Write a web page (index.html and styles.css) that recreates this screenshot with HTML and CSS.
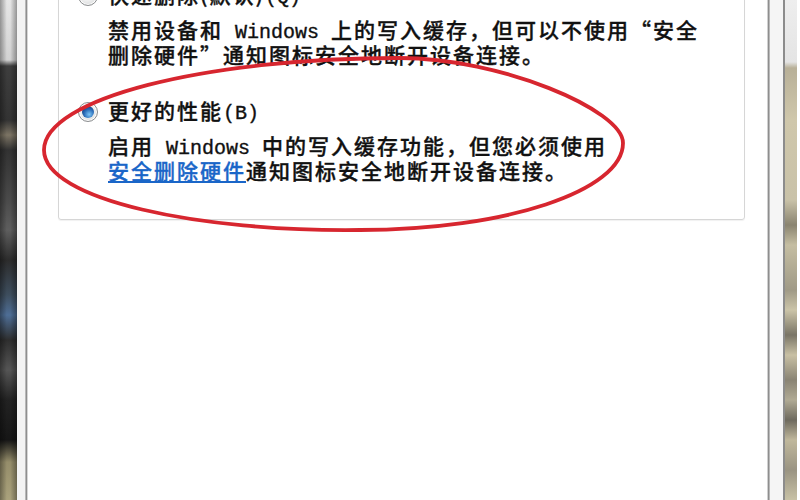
FILE: index.html
```html
<!DOCTYPE html>
<html lang="zh-CN">
<head>
<meta charset="utf-8">
<title>设备策略</title>
<link rel="stylesheet" href="styles.css">
</head>
<body>
<div class="screen">
  <div class="frame-left"></div>
  <div class="edge-left"></div>
  <main class="content">
    <section class="group">
      <div class="option">
        <div class="opt-title"><span class="radio"></span><span class="label">快速删除(默认)<span class="lat">(Q)</span></span></div>
        <p class="desc">禁用设备和<span class="lat"> Windows </span>上的写入缓存，但可以不使用“安全<br>删除硬件”通知图标安全地断开设备连接。</p>
      </div>
      <div class="option second">
        <div class="opt-title"><span class="radio on"></span><span class="label">更好的性能<span class="lat">(B)</span></span></div>
        <p class="desc">启用<span class="lat"> Windows </span>中的写入缓存功能，但您必须使用<br><a class="link" href="#">安全删除硬件</a>通知图标安全地断开设备连接。</p>
      </div>
    </section>
  </main>
  <div class="edge-right"></div>
  <div class="frame-right"></div>
  <svg class="mark" width="800" height="500" viewBox="0 0 800 500" aria-hidden="true">
    <path d="M44 150 C44 99 203 58 400 58 C500 58 623 110 623 143 C623 191 505 230 360 230 C200 232 44 200 44 150 Z" fill="none" stroke="#d7262f" stroke-width="3.8" stroke-linecap="round"/>
  </svg>
</div>
</body>
</html>
```
FILE: styles.css
```css
html, body {
  margin: 0;
  padding: 0;
  background: #fff;
}

.screen {
  position: relative;
  width: 800px;
  height: 500px;
  display: flex;
  overflow: hidden;
  font-family: "Noto Sans CJK SC", "Noto Sans", sans-serif;
}

.frame-left {
  width: 17px;
  flex: none;
  background:
    linear-gradient(to right, rgba(0,0,0,0.35) 0, rgba(0,0,0,0) 40%, rgba(0,0,0,0) 60%, rgba(0,0,0,0.35) 100%),
    linear-gradient(to bottom, #e6e6e6 0, #d2d2d2 60px, #3e3e3e 66px, #333333 120px, #7c7464 135px, #323232 150px, #4a4a4a 200px, #5e5e5e 230px, #2c2c2c 260px, #3e4e5e 295px, #4e6e96 315px, #2e2e2e 340px, #555555 370px, #222222 400px, #161616 440px, #958d6a 462px, #aaa27c 500px);
}

.edge-left {
  width: 11px;
  flex: none;
  background: linear-gradient(to right, #f3f3f3 0 8px, #b8b8b8 8px 9px, #8e8e8e 9px 10px, #d6d6d6 10px 11px);
}

.content {
  flex: 1;
  min-width: 0;
  background: #fff;
  padding: 0 22px 0 30px;
}

.edge-right {
  width: 16px;
  flex: none;
  background: linear-gradient(to right, #d0d0d0 0 1px, #8e8e8e 1px 2px, #b8b8b8 2px 3px, #f5f5f5 3px 16px);
}

.frame-right {
  width: 17px;
  flex: none;
  background:
    linear-gradient(to right, #8c8c8c 0 2px, transparent 2px 14px, #fff 14px),
    linear-gradient(to bottom, #eeeeee 0, #e4e4e4 62px, #b8b098 68px, #cfc7ab 120px, #c9c2a8 200px, #8a8470 225px, #c5bea2 245px, #a09a86 290px, #cbc4a8 310px, #7a7566 335px, #c8c0a4 355px, #8a8474 380px, #b0aa94 400px, #6e6a5e 420px, #c0b89c 440px, #9a9482 470px, #c8c2a6 500px);
}

.group {
  margin-top: -40px;
  padding: 23px 0 37px 19px;
  border: 1px solid #d6d6d6;
  border-radius: 3px;
  box-shadow: 0 1px 1px rgba(0,0,0,0.06);
}

.option {
  color: #111;
  font-size: 21px;
  line-height: 23px;
  letter-spacing: 2px;
  font-weight: 500;
  -webkit-text-stroke: 0.35px #111;
}

.option.second {
  margin-top: 34px;
}

.opt-title {
  display: flex;
  align-items: center;
  gap: 10px;
  height: 23px;
}

.radio {
  position: relative;
  flex: none;
  width: 20px;
  height: 20px;
  box-sizing: border-box;
  border-radius: 50%;
  border: 1px solid #8c8e90;
  background: radial-gradient(circle at 45% 35%, #ffffff 0, #f0f0f0 45%, #cfd2d4 100%);
  box-shadow: inset 0 0 0 1px #fff;
}

.radio.on::after {
  content: "";
  position: absolute;
  left: 3px;
  top: 3px;
  width: 12px;
  height: 12px;
  border-radius: 50%;
  background: radial-gradient(circle at 60% 70%, #7cc4f4 0, #2a6cb8 45%, #123a78 80%, #0c2a5c 100%);
}

.lat {
  font-family: "Liberation Mono", "DejaVu Sans Mono", monospace;
  font-size: 20px;
  line-height: 20px;
  letter-spacing: 0;
  font-weight: 400;
  white-space: pre;
}

.desc {
  margin: 11px 0 0 30px;
}

.link {
  color: #1a66c8;
  text-decoration: underline;
  -webkit-text-stroke: 0.35px #1a66c8;
}

.mark {
  position: absolute;
  left: 0;
  top: 0;
  pointer-events: none;
}
```
